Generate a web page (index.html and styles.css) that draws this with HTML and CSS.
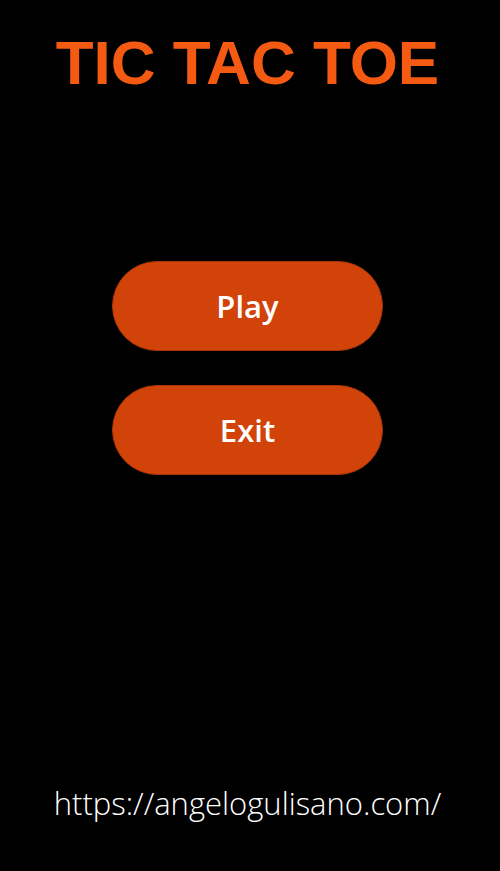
FILE: index.html
```html
<!DOCTYPE html>
<html>
<head>
<meta charset="utf-8">
<link rel="stylesheet" href="styles.css">
</head>
<body>
<div class="app">
  <h1 class="title">TIC TAC TOE</h1>
  <div class="menu">
    <button class="btn">Play</button>
    <button class="btn">Exit</button>
  </div>
  <div class="footer">https://angelogulisano.com/</div>
</div>
</body>
</html>
```
FILE: styles.css
```css
html, body {
  margin: 0;
  padding: 0;
  background: #000;
}
.app {
  width: 495px;
  height: 871px;
  display: flex;
  flex-direction: column;
  align-items: center;
}
.title {
  margin: 26px 0 0 0;
  font-family: "Liberation Sans", Arial, sans-serif;
  font-weight: bold;
  font-size: 62px;
  line-height: 74px;
  color: #f55a12;
}
.menu {
  margin-top: 161px;
  display: flex;
  flex-direction: column;
  gap: 34px;
}
.btn {
  width: 271px;
  height: 90px;
  border-radius: 45px;
  background: #d24309;
  border: 1px solid #a8360a;
  color: #fff;
  font-family: "Open Sans", sans-serif;
  font-weight: 600;
  font-size: 31px;
  padding: 0;
}
.footer {
  margin-top: auto;
  margin-bottom: 47px;
  font-family: "Open Sans", sans-serif;
  font-weight: 300;
  font-size: 31px;
  color: #fff;
}
```
